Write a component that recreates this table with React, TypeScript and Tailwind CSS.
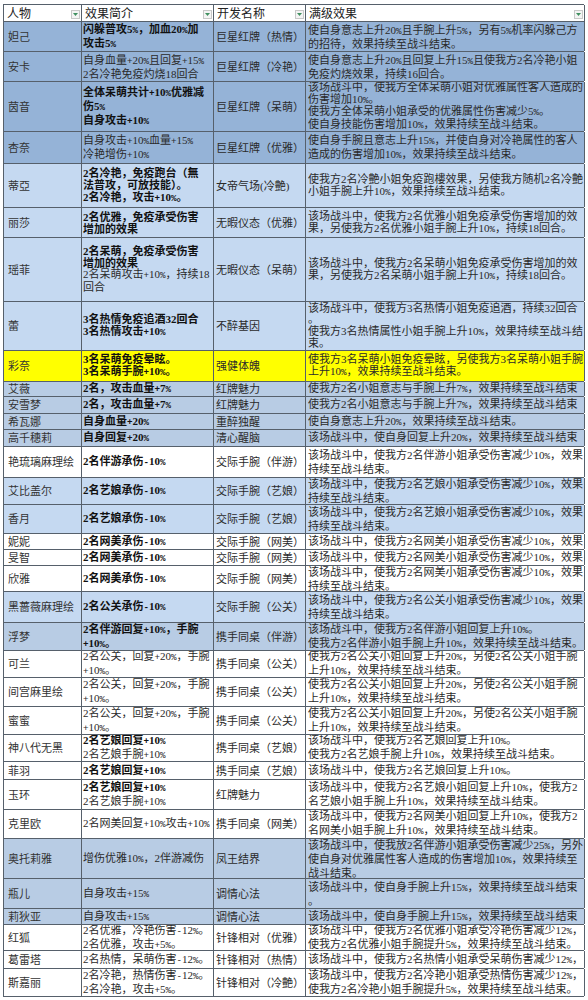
import clsx from 'clsx';

// '!' at the start of a line = bold line
interface Row {
  name: string;
  brief: string[];
  skill: string;
  effect: string[];
  bg: string;
  h: string;
}

const rows: Row[] = [
  { name: '妲己', bg: 'bg-[#95b3d7]', h: 'h-[30px]', brief: ['!闪躲普攻5%，加血20%加', '!攻击5%'], skill: '巨星红牌（热情）', effect: ['使自身意志上升20%且手腕上升5%，另有5%机率闪躲己方', '的招待，效果持续至战斗结束。'] },
  { name: '安卡', bg: 'bg-[#95b3d7]', h: 'h-[30px]', brief: ['自身血量+20%且回复+15%', '2名冷艳免疫灼烧18回合'], skill: '巨星红牌（冷艳）', effect: ['使自身意志上升20%且回复上升15%且使我方2名冷艳小姐', '免疫灼烧效果，持续16回合。'] },
  { name: '茵音', bg: 'bg-[#95b3d7]', h: 'h-[50px]', brief: ['!全体呆萌共计+10%优雅减', '!伤5%', '!自身攻击+10%'], skill: '巨星红牌（呆萌）', effect: ['该场战斗中，使我方全体呆萌小姐对优雅属性客人造成的', '伤害增加10%。', '使我方全体呆萌小姐承受的优雅属性伤害减少5%。', '使自身技能伤害增加10%，效果持续至战斗结束。'] },
  { name: '杏奈', bg: 'bg-[#95b3d7]', h: 'h-[32px]', brief: ['自身攻击+10%血量+15%', '冷艳增伤+10%'], skill: '巨星红牌（优雅）', effect: ['使自身手腕且意志上升15%，并使自身对冷艳属性的客人', '造成的伤害增加10%，效果持续至战斗结束。'] },
  { name: '蒂亞', bg: 'bg-[#c5d9f1]', h: 'h-[44px]', brief: ['!2名冷艳，免疫跑台（無', '!法普攻，可放技能）。', '!2名冷艳，攻击+10%。'], skill: '女帝气场(冷艶)', effect: ['使我方2名冷艶小姐免疫跑樓效果，另使我方随机2名冷艶', '小姐手腕上升10%，效果持续至战斗结束。'] },
  { name: '丽莎', bg: 'bg-[#c5d9f1]', h: 'h-[30px]', brief: ['!2名优雅，免疫承受伤害', '!增加的效果'], skill: '无暇仪态（优雅）', effect: ['该场战斗中，使我方2名优雅小姐免疫承受伤害增加的效', '果，另使我方2名优雅小姐手腕上升10%，持续18回合。'] },
  { name: '瑶菲', bg: 'bg-[#c5d9f1]', h: 'h-[64px]', brief: ['!2名呆萌，免疫承受伤害', '!增加的效果', '2名呆萌攻击+10%，持续18', '回合'], skill: '无暇仪态（呆萌）', effect: ['该场战斗中，使我方2名呆萌小姐免疫承受伤害增加的效', '果，另使我方2名呆萌小姐手腕上升10%，持续18回合。'] },
  { name: '蕾', bg: 'bg-[#c5d9f1]', h: 'h-[49px]', brief: ['!3名热情免疫追酒32回合', '!3名热情攻击+10%'], skill: '不醉基因', effect: ['该场战斗中，使我方3名热情小姐免疫追酒，持续32回合', '。', '使我方3名热情属性小姐手腕上升10%，效果持续至战斗结', '束。'] },
  { name: '彩奈', bg: 'bg-[#ffff00]', h: 'h-[31px]', brief: ['!3名呆萌免疫晕眩。', '!3名呆萌手腕+10%。'], skill: '强健体魄', effect: ['使我方3名呆萌小姐免疫晕眩，另使我方3名呆萌小姐手腕', '上升10%，效果持续至战斗结束。'] },
  { name: '艾薇', bg: 'bg-[#b8cce4]', h: 'h-[15px]', brief: ['!2名，攻击血量+7%'], skill: '红牌魅力', effect: ['使我方2名小姐意志与手腕上升7%，效果持续至战斗结束'] },
  { name: '安雪梦', bg: 'bg-[#b8cce4]', h: 'h-[17px]', brief: ['!2名，攻击血量+7%'], skill: '红牌魅力', effect: ['使我方2名小姐意志与手腕上升7%，效果持续至战斗结束'] },
  { name: '希瓦娜', bg: 'bg-[#b8cce4]', h: 'h-[16px]', brief: ['!自身血量+20%'], skill: '重醉独醒', effect: ['使自身意志上升20%，效果持续至战斗结束。'] },
  { name: '高千穗莉', bg: 'bg-[#b8cce4]', h: 'h-[17px]', brief: ['!自身回复+20%'], skill: '清心醒脑', effect: ['该场战斗中，使自身回复上升20%，效果持续至战斗结束'] },
  { name: '艳琉璃麻理绘', bg: 'bg-white', h: 'h-[31px]', brief: ['!2名伴游承伤-10%'], skill: '交际手腕（伴游）', effect: ['该场战斗中，使我方2名伴游小姐承受伤害减少10%，效果', '持续至战斗结束。'] },
  { name: '艾比盖尔', bg: 'bg-[#c5d9f1]', h: 'h-[27px]', brief: ['!2名艺娘承伤-10%'], skill: '交际手腕（艺娘）', effect: ['该场战斗中，使我方2名艺娘小姐承受伤害减少10%，效果', '持续至战斗结束。'] },
  { name: '香月', bg: 'bg-[#c5d9f1]', h: 'h-[29px]', brief: ['!2名艺娘承伤-10%'], skill: '交际手腕（艺娘）', effect: ['该场战斗中，使我方2名艺娘小姐承受伤害减少10%，效果', '持续至战斗结束。'] },
  { name: '妮妮', bg: 'bg-white', h: 'h-[16px]', brief: ['!2名网美承伤-10%'], skill: '交际手腕（网美）', effect: ['该场战斗中，使我方2名网美小姐承受伤害减少10%，效果'] },
  { name: '旻智', bg: 'bg-white', h: 'h-[16px]', brief: ['!2名网美承伤-10%'], skill: '交际手腕（网美）', effect: ['该场战斗中，使我方2名网美小姐承受伤害减少10%，效果'] },
  { name: '欣雅', bg: 'bg-white', h: 'h-[26px]', brief: ['!2名网美承伤-10%'], skill: '交际手腕（网美）', effect: ['该场战斗中，使我方2名网美小姐承受伤害减少10%，效果', '持续至战斗结束。'] },
  { name: '黑蔷薇麻理绘', bg: 'bg-[#c5d9f1]', h: 'h-[31px]', brief: ['!2名公关承伤-10%'], skill: '交际手腕（公关）', effect: ['该场战斗中，使我方2名公关小姐承受伤害减少10%，效果', '持续至战斗结束。'] },
  { name: '浮梦', bg: 'bg-[#b8cce4]', h: 'h-[28px]', brief: ['!2名伴游回复+10%，手腕', '!+10%。'], skill: '携手同桌（伴游）', effect: ['该场战斗中，使我方2名伴游小姐回复上升10%。', '使我方2名伴游小姐手腕上升10%，效果持续至战斗结束。'] },
  { name: '可兰', bg: 'bg-white', h: 'h-[27px]', brief: ['2名公关，回复+20%，手腕', '+10%。'], skill: '携手同桌（公关）', effect: ['使我方2名公关小姐回复上升20%，另使2名公关小姐手腕', '上升10%，效果持续至战斗结束。'] },
  { name: '间宫麻里绘', bg: 'bg-white', h: 'h-[29px]', brief: ['2名公关，回复+20%，手腕', '+10%。'], skill: '携手同桌（公关）', effect: ['使我方2名公关小姐回复上升20%，另使2名公关小姐手腕', '上升10%，效果持续至战斗结束。'] },
  { name: '蜜蜜', bg: 'bg-white', h: 'h-[28px]', brief: ['2名公关，回复+20%，手腕', '+10%。'], skill: '携手同桌（公关）', effect: ['使我方2名公关小姐回复上升20%，另使2名公关小姐手腕', '上升10%，效果持续至战斗结束。'] },
  { name: '神八代无黑', bg: 'bg-white', h: 'h-[27px]', brief: ['!2名艺娘回复+10%', '2名艺娘手腕+10%'], skill: '携手同桌（艺娘）', effect: ['该场战斗中，使我方2名艺娘回复上升10%。', '使我方2名艺娘手腕上升10%，效果持续至战斗结束。'] },
  { name: '菲羽', bg: 'bg-white', h: 'h-[18px]', brief: ['!2名艺娘回复+10%'], skill: '携手同桌（艺娘）', effect: ['该场战斗中，使我方2名艺娘回复上升10%。'] },
  { name: '玉环', bg: 'bg-white', h: 'h-[30px]', brief: ['!2名艺娘回复+10%', '2名艺娘手腕+10%'], skill: '红牌魅力', effect: ['该场战斗中，使我方2名艺娘小姐回复上升10%，使我方2', '名艺娘小姐手腕上升10%，效果持续至战斗结束。'] },
  { name: '克里欧', bg: 'bg-white', h: 'h-[29px]', brief: ['2名网美回复+10%攻击+10%'], skill: '携手同桌（网美）', effect: ['该场战斗中，使我方2名网美小姐回复上升10%，使我方2', '名网美小姐手腕上升10%，效果持续至战斗结束。'] },
  { name: '奥托莉雅', bg: 'bg-[#b8cce4]', h: 'h-[40px]', brief: ['增伤优雅10%，2伴游减伤'], skill: '凤王结界', effect: ['该场战斗中，使我放2名伴游小姐承受伤害减少25%，另外', '使自身对优雅属性客人造成的伤害增加10%，效果持续至', '战斗结束。'] },
  { name: '瓶儿', bg: 'bg-[#b8cce4]', h: 'h-[30px]', brief: ['自身攻击+15%'], skill: '调情心法', effect: ['该场战斗中，使自身手腕上升15%，效果持续至战斗结束', '。'] },
  { name: '莉狄亚', bg: 'bg-[#b8cce4]', h: 'h-[16px]', brief: ['自身攻击+15%'], skill: '调情心法', effect: ['该场战斗中，使自身手腕上升15%，效果持续至战斗结束'] },
  { name: '红狐', bg: 'bg-white', h: 'h-[26px]', brief: ['2名优雅，冷艳伤害-12%。', '2名优雅，攻击+5%。'], skill: '针锋相对（优雅）', effect: ['该场战斗中，使我方2名优雅小姐承受冷艳伤害减少12%，', '使我方2名优雅小姐手腕提升5%，效果持续至战斗结束。'] },
  { name: '葛雷塔', bg: 'bg-white', h: 'h-[18px]', brief: ['2名热情，呆萌伤害-12%。'], skill: '针锋相对（热情）', effect: ['该场战斗中，使我方2名热情小姐承受呆萌伤害减少12%，'] },
  { name: '斯嘉丽', bg: 'bg-white', h: 'h-[28px]', brief: ['2名冷艳，热情伤害-12%。', '2名冷艳，攻击+5%。'], skill: '针锋相对（冷艶）', effect: ['该场战斗中，使我方2名冷艳小姐承受热情伤害减少12%，', '使我方2名冷艳小姐手腕提升5%，效果持续至战斗结束。'] },
];

const headers = ['人物', '效果简介', '开发名称', '满级效果'];
const grid = 'grid grid-cols-[78px_132px_92px_279px]';

// the sheet font has half-width symbols; a small mono keeps % + - at 5.5px
function Text({ s }: { s: string }) {
  const parts = s.split(/([%+\-])/);
  return (
    <>
      {parts.map((p, i) =>
        /^[%+\-]$/.test(p) ? (
          <span key={i} className="font-['Liberation_Mono',monospace] text-[9.2px]">{p}</span>
        ) : (
          p
        )
      )}
    </>
  );
}

function Cell({ lines, className }: { lines: string[]; className?: string }) {
  return (
    <div
      className={clsx(
        'flex flex-col justify-center overflow-hidden whitespace-nowrap border-r border-[#56606b]',
        lines.length >= 4 ? 'leading-[11.5px]' : 'leading-[12px]',
        className
      )}
    >
      {lines.map((l, i) =>
        l.startsWith('!') ? (
          <span key={i} className="font-bold text-[#111]"><Text s={l.slice(1)} /></span>
        ) : (
          <span key={i}><Text s={l} /></span>
        )
      )}
    </div>
  );
}

function FilterButton() {
  return (
    <span className="flex h-[9px] w-[9px] items-center justify-center border border-[#c8c8c8] bg-[#f4f4f4]">
      <svg width="5" height="3" viewBox="0 0 5 3" aria-hidden="true">
        <path d="M0 0h5L2.5 3z" fill="#3f8f5f" />
      </svg>
    </span>
  );
}

export default function App() {
  return (
    <div className="min-h-[1000px] w-[588px] bg-white pl-[3px] pt-[4px] font-['Liberation_Serif','Noto_Sans_CJK_SC',serif] text-[11px] text-[#2a2a2a]">
      <div className="w-[581px] border-l border-t border-[#56606b]">
        <div className={clsx(grid, 'h-[17px] border-b border-[#56606b] bg-white')}>
          {headers.map((h) => (
            <div key={h} className="flex items-center justify-between border-r border-[#56606b] pl-[3px] pr-[1px] text-[12px] text-[#222]">
              <span>{h}</span>
              <FilterButton />
            </div>
          ))}
        </div>
        {rows.map((r) => (
          <div key={r.name} className={clsx(grid, r.h, r.bg, 'border-b border-[#56606b]')}>
            <Cell lines={[r.name]} className="pl-[4px] text-[#333]" />
            <Cell lines={r.brief} className="pl-[1px]" />
            <Cell lines={[r.skill]} className="pl-[2px]" />
            <Cell lines={r.effect} className="pl-[2px]" />
          </div>
        ))}
      </div>
    </div>
  );
}
